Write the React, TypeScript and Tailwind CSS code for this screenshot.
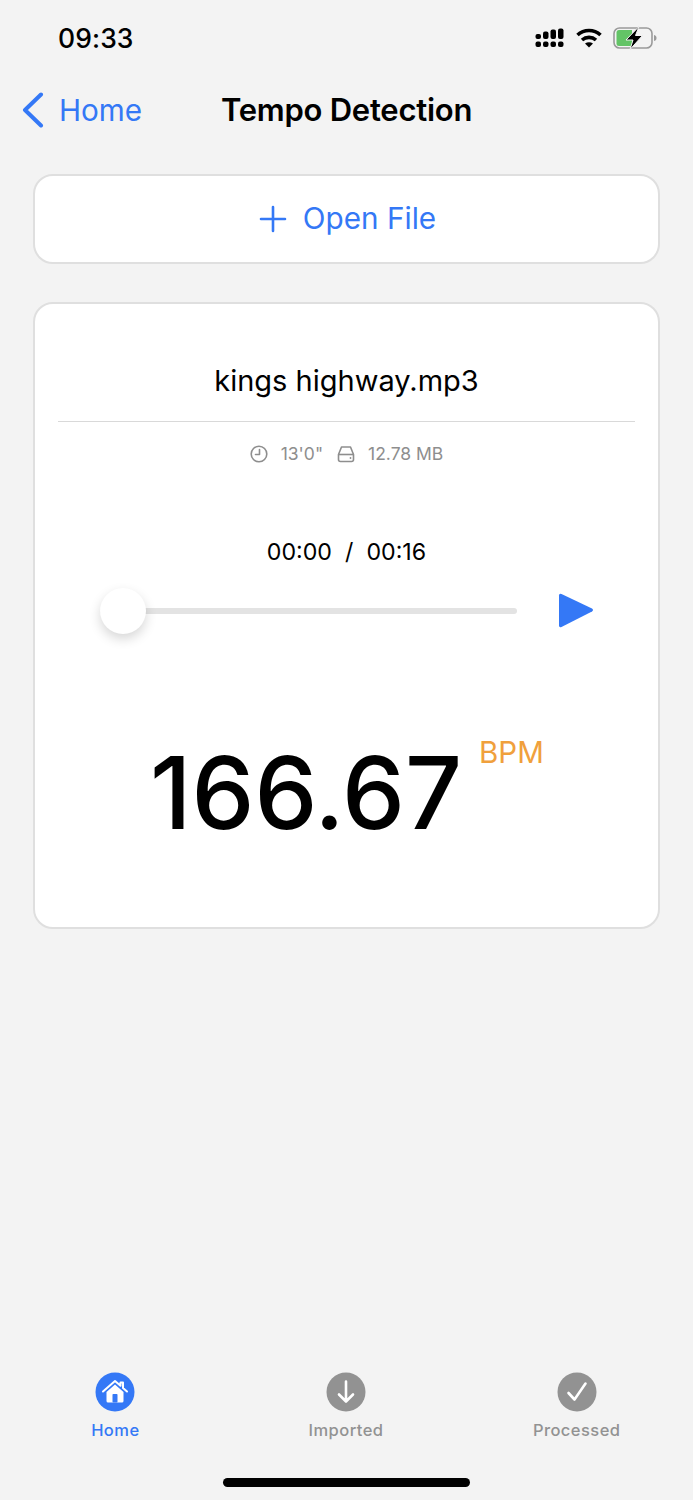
import React from 'react';

function StatusIcons() {
    return (
        <div className="flex items-center gap-[11px]">
            {/* Signal */}
            <svg width="30" height="20" viewBox="0 0 30 20" fill="#000">
                <rect x="0.5" y="6" width="5.5" height="5" rx="2" />
                <rect x="0.5" y="13.5" width="5.5" height="5.5" rx="2" />
                <rect x="8" y="3.5" width="5.5" height="7.5" rx="2" />
                <rect x="8" y="13.5" width="5.5" height="5.5" rx="2" />
                <rect x="15.5" y="1.5" width="5.5" height="9.5" rx="2" />
                <rect x="15.5" y="13.5" width="5.5" height="5.5" rx="2" />
                <rect x="23" y="0.5" width="5.5" height="10.5" rx="2" />
                <rect x="23" y="13.5" width="5.5" height="5.5" rx="2" />
            </svg>
            {/* Wifi */}
            <svg width="26" height="20" viewBox="0 0 26 20" fill="none" stroke="#000" strokeWidth="3.6">
                <path d="M1.5 7C8 1 18 1 24.5 7" />
                <path d="M6 12C10 8.5 16 8.5 20 12" />
                <path d="M13 19.5L9 15.6C11.5 13.8 14.5 13.8 17 15.6Z" fill="#000" stroke="none" />
            </svg>
            {/* Battery */}
            <svg width="44" height="24" viewBox="0 0 44 24">
                <rect x="1" y="2" width="38" height="20" rx="5.5" fill="none" stroke="#9a9a9a" strokeWidth="1.6" />
                <path d="M6 4H19V20H6Q3.5 20 3.5 17.5V6.5Q3.5 4 6 4Z" fill="#63c466" />
                <path d="M41 9C43 9.5 43.5 10.5 43.5 12S43 14.5 41 15Z" fill="#9a9a9a" />
                <path d="M26 0.5L13 14H20L17 23.5L29.5 9.5H22.5Z" fill="#000" stroke="#f3f3f3" strokeWidth="1" />
            </svg>
        </div>
    );
}

function TabItem({ label, color, children }: { label: string; color: string; children: React.ReactNode }) {
    return (
        <div className="flex flex-col items-center">
            <svg width="40" height="40" viewBox="0 0 40 40">
                <circle cx="20" cy="20" r="19.5" fill={color} />
                {children}
            </svg>
            <span className="mt-[8px] text-[16.5px] leading-[20px] font-[450] tracking-[0.45px]" style={{ color }}>{label}</span>
        </div>
    );
}

export default function App() {
    return (
        <div className="flex h-[1500px] w-[693px] flex-col bg-[#f3f3f3] text-black [font-family:Inter,'Liberation_Sans',sans-serif]">
            {/* Status bar */}
            <div className="flex h-[76px] items-center justify-between pl-[58px] pr-[36px]">
                <span className="text-[26.5px] leading-none font-medium tracking-[0.1px]">09:33</span>
                <StatusIcons />
            </div>

            {/* Nav bar */}
            <div className="relative flex h-[68px] items-center justify-center">
                <div className="absolute left-[22px] top-[16px] flex items-center gap-[15px] text-[#3478f6]">
                    <svg width="22" height="36" viewBox="0 0 22 36" fill="none" stroke="currentColor" strokeWidth="4" strokeLinecap="round" strokeLinejoin="round">
                        <path d="M19 2.5L3 18L19 33.5" />
                    </svg>
                    <span className="mt-[2px] text-[29.7px] leading-none">Home</span>
                </div>
                <span className="-mt-[2px] text-[31px] leading-none font-semibold tracking-[-0.25px]">Tempo Detection</span>
            </div>

            <div className="flex flex-col gap-[38px] px-[33px] pt-[30px]">
                {/* Open file */}
                <div className="flex h-[90px] items-center justify-center gap-[16px] rounded-[20px] border-2 border-[#dfdfdf] bg-white pl-[2px] text-[#3478f6]">
                    <svg width="28" height="28" viewBox="0 0 28 28" stroke="currentColor" strokeWidth="2.6" strokeLinecap="round">
                        <path d="M14 2V26M2 14H26" />
                    </svg>
                    <span className="text-[29.7px] leading-none">Open File</span>
                </div>

                {/* Track card */}
                <div className="flex h-[627px] flex-col rounded-[20px] border-2 border-[#dfdfdf] bg-white px-[23px]">
                    <div className="flex h-[118px] items-end justify-center border-b border-[#d9d9d9] pb-[22px]">
                        <span className="text-[29px] leading-[36px]">kings highway.mp3</span>
                    </div>

                    <div className="mt-[21px] flex items-center justify-center text-[17.5px] leading-[22px] text-[#8e8e8e]">
                        <svg width="18" height="18" viewBox="0 0 18 18" fill="none" stroke="currentColor" strokeWidth="1.6" strokeLinecap="round" strokeLinejoin="round">
                            <circle cx="9" cy="9" r="7.8" />
                            <path d="M9.5 4.5V9.5H5.5" />
                        </svg>
                        <span className="ml-[13px]">13'0"</span>
                        <svg width="18" height="18" viewBox="0 0 18 18" fill="none" stroke="currentColor" strokeWidth="1.6" className="ml-[14px]">
                            <path d="M4.5 2H13.5L16.5 9.5V14.5Q16.5 16.5 14.5 16.5H3.5Q1.5 16.5 1.5 14.5V9.5Z" strokeLinejoin="round" />
                            <path d="M1.5 9.5H16.5" />
                            <circle cx="13.5" cy="13" r="0.9" fill="currentColor" stroke="none" />
                        </svg>
                        <span className="ml-[13px]">12.78 MB</span>
                    </div>

                    <div className="mt-[72px] text-center text-[23.2px] leading-[30px] whitespace-pre">00:00  /  00:16</div>

                    {/* Player */}
                    <div className="mt-[26px] flex items-center pl-[42px]">
                        <div className="relative h-[6px] w-[417px] rounded-full bg-[#e3e3e3]">
                            <div className="absolute left-0 top-[-20px] h-[46px] w-[46px] rounded-full bg-white shadow-[0_5px_12px_rgba(0,0,0,0.16)]" />
                        </div>
                        <svg width="36" height="36" viewBox="0 0 36 36" fill="#3478f6" className="ml-[41px]">
                            <path d="M1 2.5Q1 0 3.5 1L34 15.5Q36 17 34 18.5L3.5 34Q1 35 1 32.5Z" />
                        </svg>
                    </div>

                    {/* Tempo */}
                    <div className="mt-[114px] flex items-start pl-[92px]">
                        <span className="text-[100px] leading-[100px] font-medium">166.67</span>
                        <span className="-mt-[8px] ml-[17px] text-[29.5px] leading-[34px] text-[#f0a03c]">BPM</span>
                    </div>
                </div>
            </div>

            {/* Tabs */}
            <div className="mt-auto grid grid-cols-3 pr-px">
                <TabItem label="Home" color="#3478f6">
                    <path d="M8 19.5L20 9L25.5 13.8V10.5H28V16L32 19.5" fill="none" stroke="#fff" strokeWidth="2" strokeLinecap="round" strokeLinejoin="round" />
                    <path d="M11.5 20L20 12.5L28.5 20V29Q28.5 30.5 27 30.5H13Q11.5 30.5 11.5 29Z" fill="#fff" />
                    <rect x="17.5" y="22" width="5" height="8.5" rx="0.8" fill="#3478f6" />
                </TabItem>
                <TabItem label="Imported" color="#929292">
                    <path d="M20 9.5V29M13 22.5L20 29.5L27 22.5" fill="none" stroke="#fff" strokeWidth="2.6" strokeLinecap="round" strokeLinejoin="round" />
                </TabItem>
                <TabItem label="Processed" color="#929292">
                    <path d="M11.5 21L17.5 27.5L28.5 11.5" fill="none" stroke="#fff" strokeWidth="2.6" strokeLinecap="round" strokeLinejoin="round" />
                </TabItem>
            </div>

            {/* Home indicator */}
            <div className="mb-[13px] mt-[38px] h-[9px] w-[247px] self-center rounded-full bg-black" />
        </div>
    );
}
